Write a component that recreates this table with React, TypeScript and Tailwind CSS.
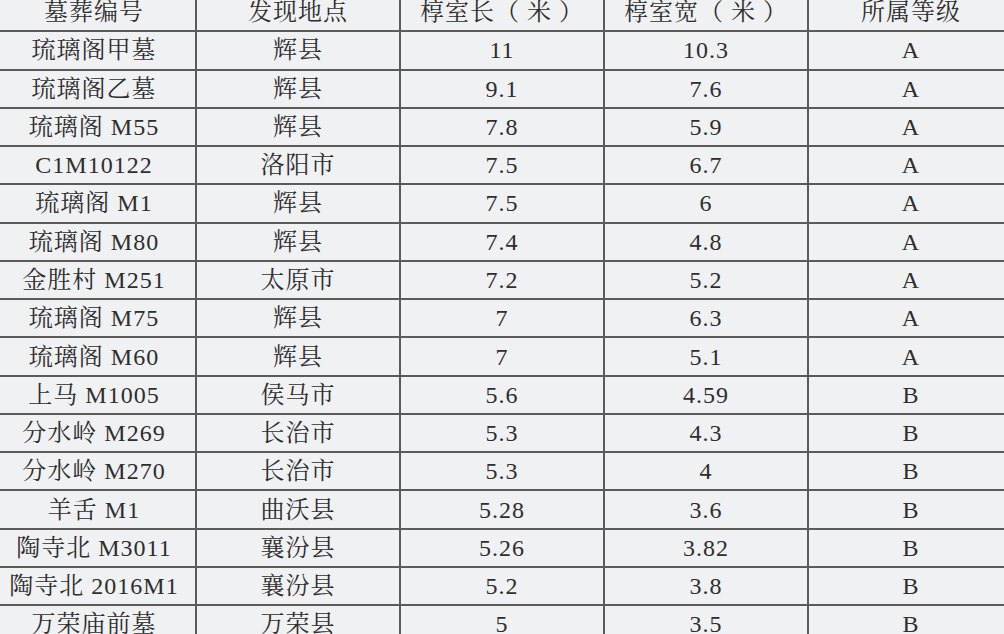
const header = ['墓葬编号', '发现地点', '椁室长（ 米 ）', '椁室宽（ 米 ）', '所属等级'];

const rows = [
    ['琉璃阁甲墓', '辉县', '11', '10.3', 'A'],
    ['琉璃阁乙墓', '辉县', '9.1', '7.6', 'A'],
    ['琉璃阁 M55', '辉县', '7.8', '5.9', 'A'],
    ['C1M10122', '洛阳市', '7.5', '6.7', 'A'],
    ['琉璃阁 M1', '辉县', '7.5', '6', 'A'],
    ['琉璃阁 M80', '辉县', '7.4', '4.8', 'A'],
    ['金胜村 M251', '太原市', '7.2', '5.2', 'A'],
    ['琉璃阁 M75', '辉县', '7', '6.3', 'A'],
    ['琉璃阁 M60', '辉县', '7', '5.1', 'A'],
    ['上马 M1005', '侯马市', '5.6', '4.59', 'B'],
    ['分水岭 M269', '长治市', '5.3', '4.3', 'B'],
    ['分水岭 M270', '长治市', '5.3', '4', 'B'],
    ['羊舌 M1', '曲沃县', '5.28', '3.6', 'B'],
    ['陶寺北 M3011', '襄汾县', '5.26', '3.82', 'B'],
    ['陶寺北 2016M1', '襄汾县', '5.2', '3.8', 'B'],
    ['万荣庙前墓', '万荣县', '5', '3.5', 'B'],
];

function Row({ cells }: { cells: string[] }) {
    return (
        <div className="flex h-[38.27px] shrink-0 border-b-2 border-[#5b5b5b]">
            {cells.map((c, i) => (
                <div
                    key={i}
                    className={`w-[204px] shrink-0 flex items-center justify-center whitespace-pre ${i < 4 ? 'border-r-2 border-[#5b5b5b]' : ''}`}
                >
                    {c}
                </div>
            ))}
        </div>
    );
}

export default function App() {
    return (
        <div className="w-[1004px] h-[634px] overflow-hidden bg-[#f0f1f3]">
            {/* Table, shifted so the outer columns are cut at the edges */}
            <div
                className="flex flex-col ml-[-7px] mt-[-6px] w-[1020px] text-[24px] leading-none tracking-[1px] text-[#2e2e2e]"
                style={{ fontFamily: '"Liberation Serif", "Noto Serif CJK SC", "Noto Sans CJK SC", serif' }}
            >
                <Row cells={header} />
                {rows.map((r, i) => (
                    <Row key={i} cells={r} />
                ))}
            </div>
        </div>
    );
}
